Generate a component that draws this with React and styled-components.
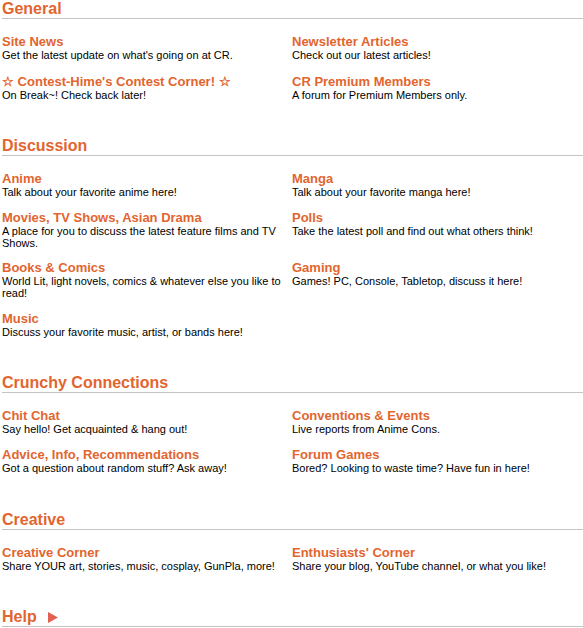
import React from 'react';
import styled, { createGlobalStyle } from 'styled-components';

const ORANGE = '#e2652f';

const GlobalStyle = createGlobalStyle`
  html, body {
    margin: 0;
    padding: 0;
    background: #fff;
  }
  body {
    font-family: "Liberation Sans", Arial, Helvetica, sans-serif;
    color: #000;
  }
`;

const Page = styled.div`
  padding: 1px 0 0 2px;
  width: 581px;
`;

const Section = styled.section`
  margin-bottom: 25.4px;
`;

const SectionTitle = styled.h2`
  display: flex;
  align-items: center;
  gap: 11px;
  margin: 0 0 16px;
  padding-bottom: 1px;
  font-size: 16px;
  line-height: 16px;
  font-weight: bold;
  color: ${ORANGE};
  border-bottom: 1px solid #c4c4c4;
`;

const Arrow = styled.svg`
  width: 10px;
  height: 11px;
  fill: #e2604f;
`;

const Grid = styled.div`
  display: grid;
  grid-template-columns: 290px 291px;
`;

const Forum = styled.div`
  padding-right: 6px;
  margin-bottom: ${(p) => (p.$tall ? 13.6 : 12.4)}px;
`;

const ForumName = styled.a`
  display: block;
  font-size: 13px;
  line-height: 14px;
  font-weight: bold;
  color: ${ORANGE};
  text-decoration: none;
`;

const ForumDesc = styled.p`
  margin: 0;
  font-size: 11px;
  line-height: 12px;
`;

const sections = [
  {
    title: 'General',
    forums: [
      ['Site News', "Get the latest update on what's going on at CR."],
      ['Newsletter Articles', 'Check out our latest articles!'],
      ["☆ Contest-Hime's Contest Corner! ☆", 'On Break~! Check back later!'],
      ['CR Premium Members', 'A forum for Premium Members only.'],
    ],
  },
  {
    title: 'Discussion',
    forums: [
      ['Anime', 'Talk about your favorite anime here!'],
      ['Manga', 'Talk about your favorite manga here!'],
      ['Movies, TV Shows, Asian Drama', 'A place for you to discuss the latest feature films and TV Shows.'],
      ['Polls', 'Take the latest poll and find out what others think!'],
      ['Books & Comics', 'World Lit, light novels, comics & whatever else you like to read!'],
      ['Gaming', 'Games! PC, Console, Tabletop, discuss it here!'],
      ['Music', 'Discuss your favorite music, artist, or bands here!'],
    ],
  },
  {
    title: 'Crunchy Connections',
    forums: [
      ['Chit Chat', 'Say hello! Get acquainted & hang out!'],
      ['Conventions & Events', 'Live reports from Anime Cons.'],
      ['Advice, Info, Recommendations', 'Got a question about random stuff? Ask away!'],
      ['Forum Games', 'Bored? Looking to waste time? Have fun in here!'],
    ],
  },
  {
    title: 'Creative',
    forums: [
      ['Creative Corner', 'Share YOUR art, stories, music, cosplay, GunPla, more!'],
      ["Enthusiasts' Corner", 'Share your blog, YouTube channel, or what you like!'],
    ],
  },
];

export default function App() {
  return (
    <>
      <GlobalStyle />
      <Page>
        {sections.map((s) => (
          <Section key={s.title}>
            <SectionTitle>{s.title}</SectionTitle>
            <Grid>
              {s.forums.map(([name, desc], i) => (
                <Forum key={name} $tall={s.title === 'General' && i < 2}>
                  <ForumName href="#">{name}</ForumName>
                  <ForumDesc>{desc}</ForumDesc>
                </Forum>
              ))}
            </Grid>
          </Section>
        ))}
        <Section>
          <SectionTitle>
            Help
            <Arrow viewBox="0 0 10 11">
              <path d="M0 0 L10 5.5 L0 11 Z" />
            </Arrow>
          </SectionTitle>
        </Section>
      </Page>
    </>
  );
}
